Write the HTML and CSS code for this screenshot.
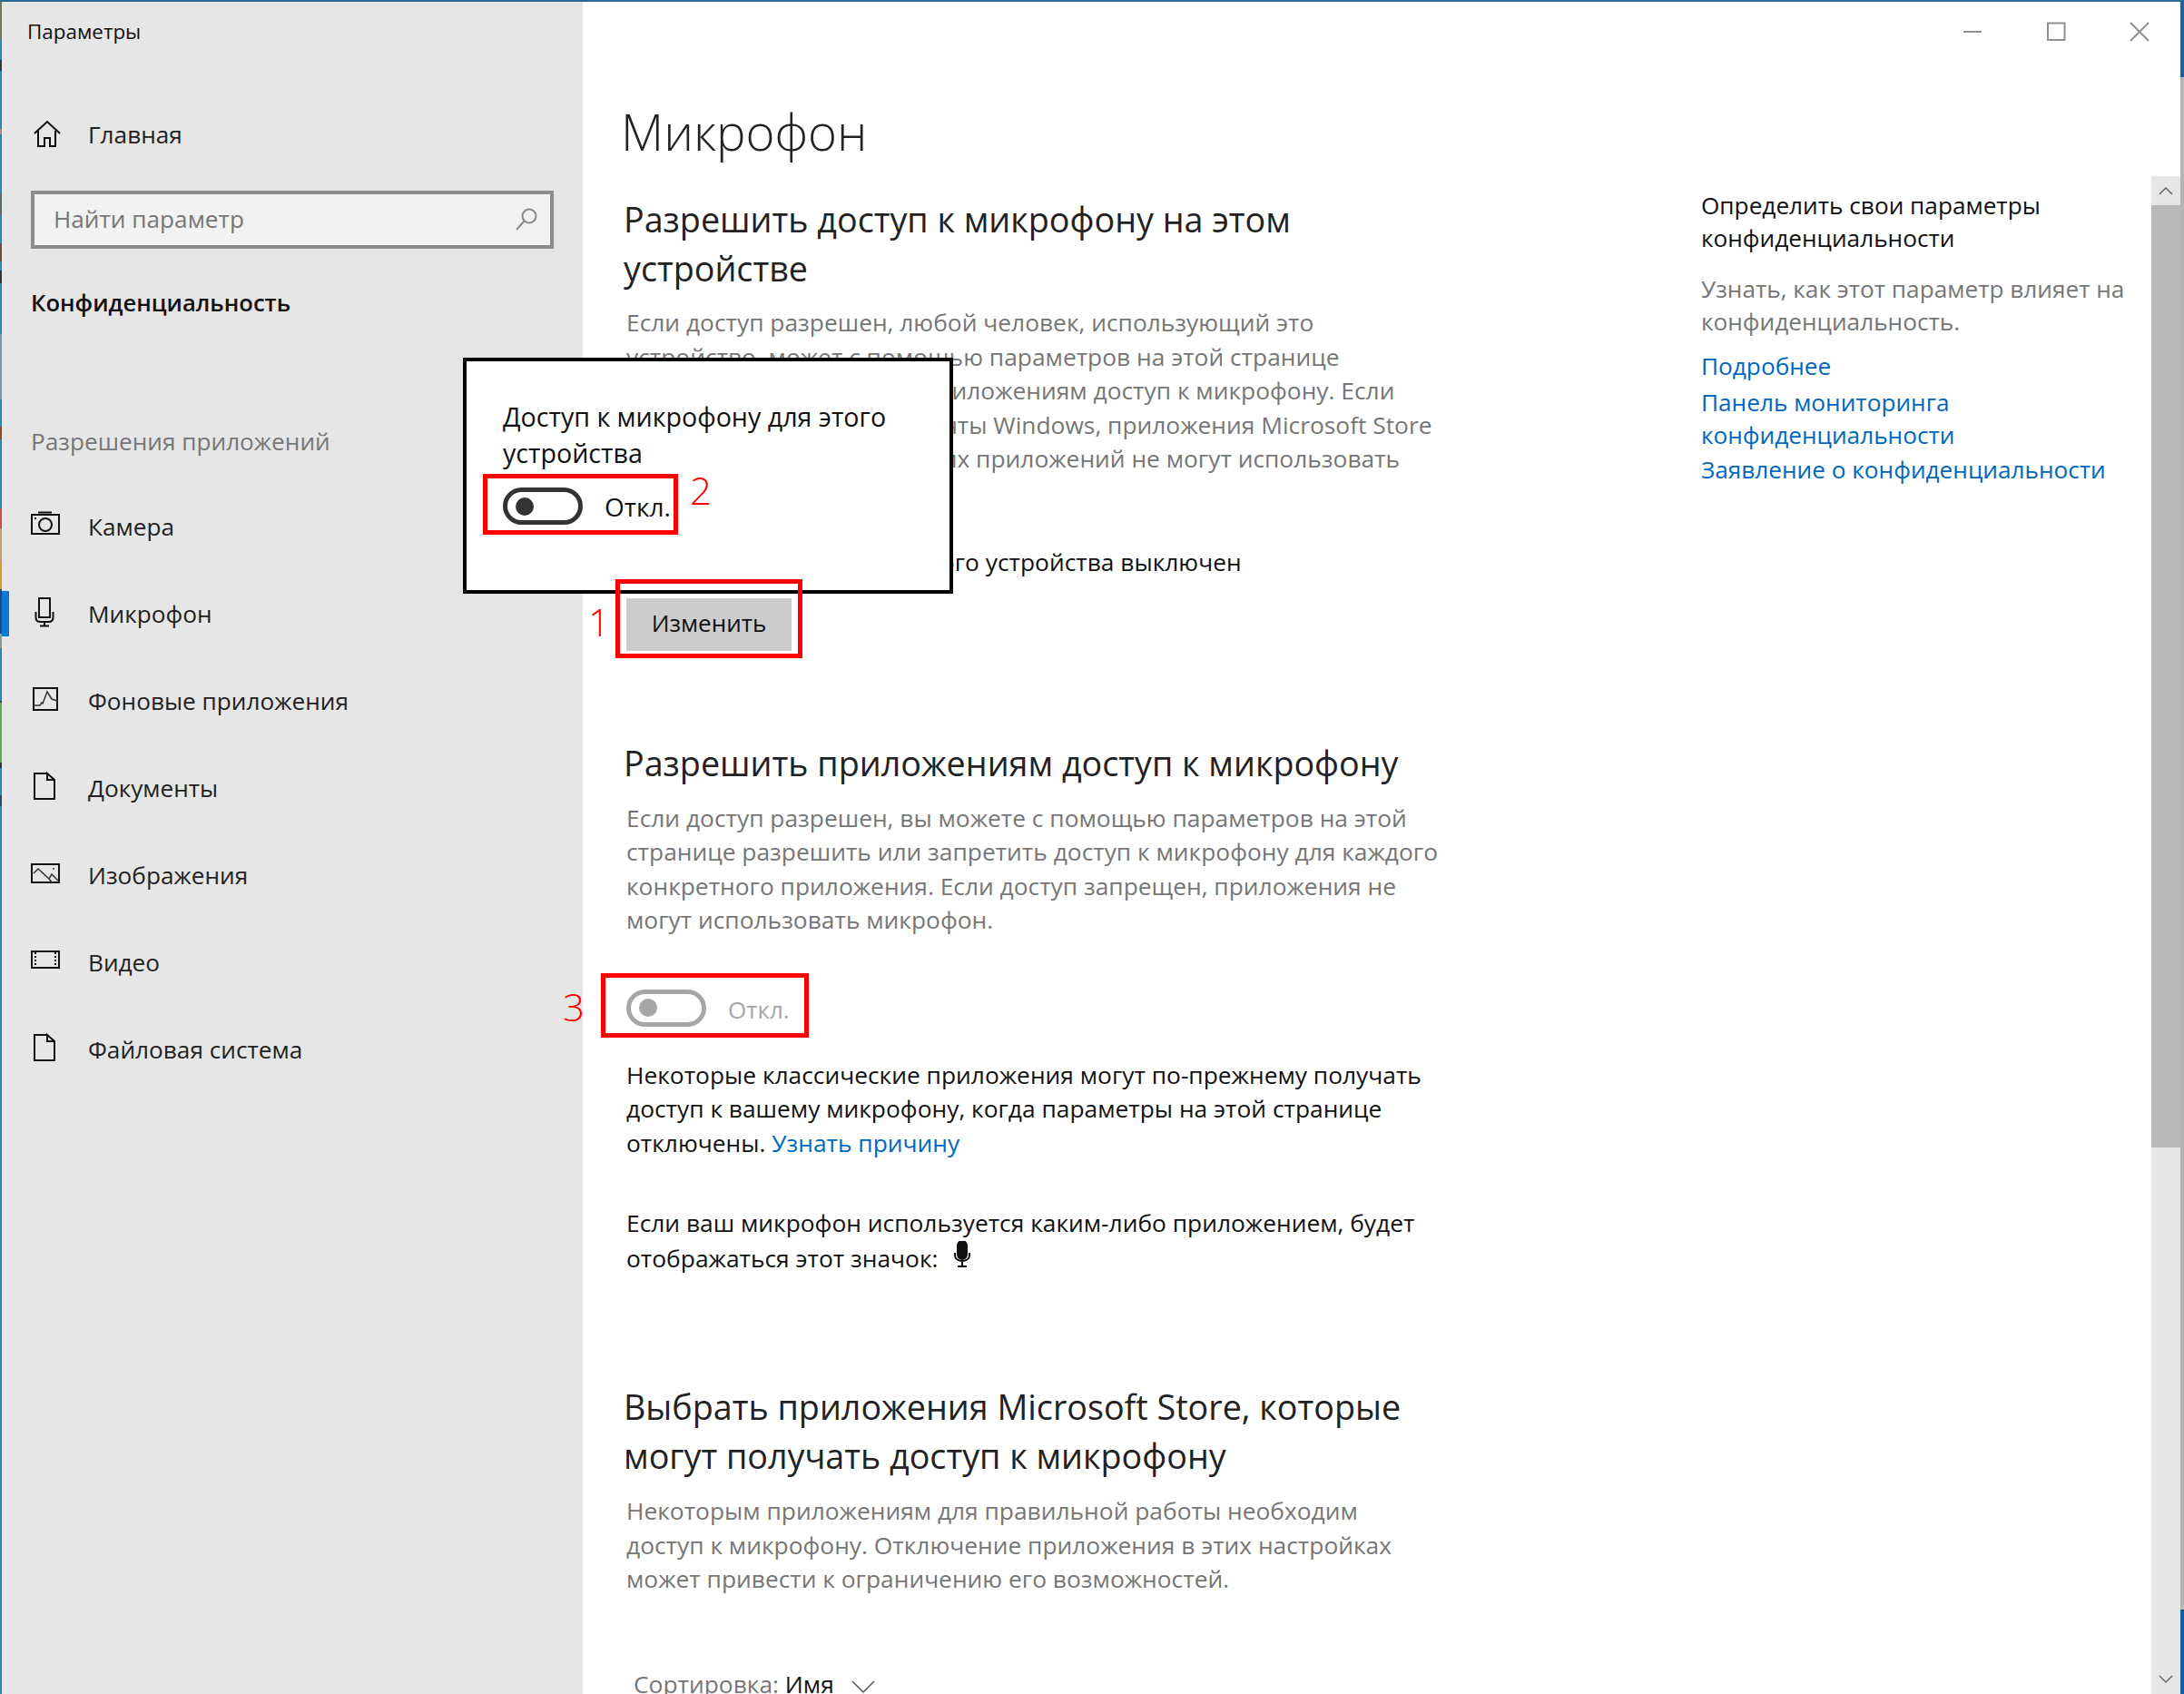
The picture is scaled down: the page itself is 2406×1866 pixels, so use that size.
FILE: index.html
```html
<!DOCTYPE html>
<html lang="ru">
<head>
<meta charset="utf-8">
<title>Параметры</title>
<link rel="stylesheet" href="styles.css">
</head>
<body>
<div class="window">
  <div class="rail"></div>
  <aside class="sidebar">
    <div class="app-title">Параметры</div>
    <a class="home">
      <span class="slot"><svg class="ico" width="34" height="34" viewBox="0 0 34 34"><path d="M4 16 18 3l14 13M8 13v17h7v-9h6v9h6V13"/></svg></span>Главная
    </a>
    <div class="search"><span class="search-text">Найти параметр</span>
      <svg class="search-ico" width="26" height="28" viewBox="0 0 26 28"><circle cx="16" cy="10" r="7.500"/><path d="M10.500 15.500 2 25"/></svg>
    </div>
    <div class="group">Конфиденциальность</div>
    <div class="caption-label">Разрешения приложений</div>
    <nav class="nav">
      <a class="item"><span class="slot"><svg class="ico" width="34" height="40" viewBox="0 0 34 40"><path d="M1 7h30v21H1z"/><circle cx="16" cy="18" r="7"/><path d="M8 4.500h15M4 11h2"/></svg></span>Камера</a>
      <a class="item active"><span class="slot"><svg class="ico" width="34" height="40" viewBox="0 0 34 40"><path d="M9 3h12v21H9z"/><path d="M5.500 18v6c0 3 2 5 5 5h9c3 0 5-2 5-5v-6M15 29v4M10 33.500h10"/></svg></span>Микрофон</a>
      <a class="item"><span class="slot"><svg class="ico" width="34" height="40" viewBox="0 0 34 40"><path d="M3 6h26v24H3z"/><path class="thin" d="M3 25h7l2-3 1 1 5-13 5 8 6 2"/></svg></span>Фоновые приложения</a>
      <a class="item"><span class="slot"><svg class="ico" width="34" height="40" viewBox="0 0 34 40"><path d="M18 4H4v28h22V11l-8-7v7h8"/></svg></span>Документы</a>
      <a class="item"><span class="slot"><svg class="ico" width="34" height="40" viewBox="0 0 34 40"><path d="M1 8h30v20H1z"/><path class="thin" d="M3 18l5-5 12 11 3-5 7 7M20 24l3 4M25 12v2"/></svg></span>Изображения</a>
      <a class="item"><span class="slot"><svg class="ico" width="34" height="40" viewBox="0 0 34 40"><path d="M1 8h30v18H1z"/><path class="dots" d="M5 9v16M27 9v16"/></svg></span>Видео</a>
      <a class="item"><span class="slot"><svg class="ico" width="34" height="40" viewBox="0 0 34 40"><path d="M18 4H4v28h22V11l-8-7v7h8"/></svg></span>Файловая система</a>
    </nav>
  </aside>
  <main class="main">
    <div class="caption">
      <svg class="cap-ico" width="22" height="22" viewBox="0 0 22 22"><path d="M1 11h20"/></svg>
      <svg class="cap-ico" width="22" height="22" viewBox="0 0 22 22"><path d="M2 1.500h18.500V20H2z"/></svg>
      <svg class="cap-ico" width="22" height="22" viewBox="0 0 22 22"><path d="M1 1l20 20M21 1 1 21"/></svg>
    </div>
    <div class="pane">
      <section class="content">
        <h1 class="title">Микрофон</h1>
        <h2 class="heading first">Разрешить доступ к микрофону на этом<br>устройстве</h2>
        <p class="text muted p1">Если доступ разрешен, любой человек, использующий это<br>устройство, может с помощью параметров на этой странице<br>выбирать, разрешать ли приложениям доступ к микрофону. Если<br>доступ запрещен, компоненты Windows, приложения Microsoft Store<br>и большинство классических приложений не могут использовать<br>микрофон.</p>
        <p class="text status">Доступ к микрофону для этого устройства выключен</p>
        <button class="change">Изменить</button>
        <h2 class="heading second">Разрешить приложениям доступ к микрофону</h2>
        <p class="text muted p2">Если доступ разрешен, вы можете с помощью параметров на этой<br>странице разрешить или запретить доступ к микрофону для каждого<br>конкретного приложения. Если доступ запрещен, приложения не<br>могут использовать микрофон.</p>
        <div class="toggle-row disabled"><span class="toggle"><i class="knob"></i></span><span class="toggle-label">Откл.</span></div>
        <p class="text p3">Некоторые классические приложения могут по-прежнему получать<br>доступ к вашему микрофону, когда параметры на этой странице<br>отключены. <a class="link">Узнать причину</a></p>
        <p class="text p4">Если ваш микрофон используется каким-либо приложением, будет<br>отображаться этот значок: <svg class="mic-fill" width="20" height="30" viewBox="0 0 20 30"><rect x="5" y="0" width="10" height="20" rx="5"/><path d="M2 13v3c0 8 16 8 16 0v-3M10 23v4M5 28h10"/></svg></p>
        <h2 class="heading third">Выбрать приложения Microsoft Store, которые<br>могут получать доступ к микрофону</h2>
        <p class="text muted p2">Некоторым приложениям для правильной работы необходим<br>доступ к микрофону. Отключение приложения в этих настройках<br>может привести к ограничению его возможностей.</p>
        <div class="sort text"><span class="sort-label">Сортировка:</span> Имя <svg class="sort-ico" width="26" height="14" viewBox="0 0 26 14"><path d="M1 1l12 12L25 1"/></svg></div>
      </section>
      <section class="related">
        <p class="rtext">Определить свои параметры<br>конфиденциальности</p>
        <p class="rtext muted r2">Узнать, как этот параметр влияет на<br>конфиденциальность.</p>
        <a class="link rtext r3">Подробнее</a>
        <a class="link rtext r4">Панель мониторинга<br>конфиденциальности</a>
        <a class="link rtext r5">Заявление о конфиденциальности</a>
      </section>
      <div class="scrollbar">
        <div class="sb-btn"><svg class="sb-ico" width="16" height="10" viewBox="0 0 16 10"><path d="M1 9l7-7 7 7"/></svg></div>
        <div class="sb-thumb"></div>
        <div class="sb-track"></div>
        <div class="sb-btn"><svg class="sb-ico" width="16" height="10" viewBox="0 0 16 10"><path d="M1 1l7 7 7-7"/></svg></div>
      </div>
    </div>
  </main>
  <div class="edge"></div>

  <div class="popup">
    <p class="popup-text">Доступ к микрофону для этого<br>устройства</p>
    <div class="toggle-row"><span class="toggle"><i class="knob"></i></span><span class="toggle-label">Откл.</span></div>
  </div>
  <div class="mark mark-1"></div>
  <div class="mark mark-2"></div>
  <div class="mark mark-3"></div>
  <span class="digit digit-1">1</span>
  <span class="digit digit-2">2</span>
  <span class="digit digit-3">3</span>
</div>
</body>
</html>
```

FILE: styles.css
```css
* { box-sizing: border-box; }
html, body { margin: 0; padding: 0; background: #fff; }
body { font-family: "Open Sans", "Noto Sans", sans-serif; color: #111; }
.window {
  position: relative;
  display: flex;
  width: 2406px;
  height: 1866px;
  overflow: hidden;
  border-top: 2px solid #2a6a90;
  white-space: nowrap;
}
.rail {
  flex: 0 0 2px;
  background: linear-gradient(
    #6a7a60 0 42px, #2a85b5 42px 64px, #2c3c4a 64px 76px, #2a85b5 76px 140px, #a88a8a 140px 146px,
    #2a85b5 146px 212px, #5a6a70 212px 236px, #2a85b5 236px 266px, #6a4a3a 266px 286px, #2a85b5 286px 296px,
    #333 296px 310px, #2a85b5 310px 366px, #7a9aa8 366px 438px, #2a85b5 438px 468px, #8a4a2a 468px 482px,
    #2a85b5 482px 558px, #c0504a 558px 580px, #c0a070 580px 616px, #c8a030 616px 647px, #1a4a8a 647px 696px,
    #8a9a8a 696px 712px, #2a85b5 712px 770px, #3a4a4a 770px 772px, #5aaa55 772px 838px, #333 838px 844px,
    #2a85b5 844px 874px, #2a4a6a 874px 886px, #2a85b5 886px
  );
}
.sidebar {
  flex: 0 0 640px;
  background: #e6e6e6;
  display: flex;
  flex-direction: column;
  font-size: 26.200px;
}
.app-title { font-size: 22.400px; line-height: 28px; margin: 19px 0 0 28px; color: #111; }
.home { display: flex; align-items: center; height: 40px; margin: 79px 0 0 32px; color: #222; }
.slot { display: flex; align-items: center; flex: 0 0 63px; }
.ico { fill: none; stroke: #111; stroke-width: 2; }
.ico .thin { stroke-width: 1.500; stroke: #333; }
.ico .dots { stroke-dasharray: 2 2; stroke-width: 2; }
.search {
  display: flex;
  align-items: center;
  justify-content: space-between;
  width: 576px;
  height: 64px;
  margin: 42px 0 0 32px;
  padding: 0 13px 0 21px;
  border: 4px solid #8c8c8c;
  background: #f2f2f2;
  color: #777;
}
.search-text { margin-top: -3px; }
.search-ico { fill: none; stroke: #888; stroke-width: 2; }
.group { margin: 40px 0 0 32px; font-size: 25.600px; font-weight: 600; line-height: 40px; color: #111; }
.caption-label { margin: 112px 0 0 32px; line-height: 40px; color: #777; }
.nav { display: flex; flex-direction: column; margin-top: 26px; }
.item { position: relative; display: flex; align-items: center; height: 96px; padding-left: 32px; color: #222; }
.item.active::before {
  content: "";
  position: absolute;
  left: 0;
  top: 23px;
  width: 8px;
  height: 50px;
  background: #0a78d7;
}
.main { flex: 1; display: flex; flex-direction: column; min-width: 0; }
.caption { display: flex; justify-content: flex-end; gap: 70px; height: 66px; padding: 22px 34px 0 0; }
.cap-ico { fill: none; stroke: #8f8f8f; stroke-width: 2; }
.pane { flex: 1; display: flex; min-height: 0; }
.content { flex: 0 0 1231px; padding-left: 48px; }
.title { margin: 47px 0 0 -6px; font-size: 54.600px; line-height: 60px; font-weight: 300; color: #222; }
.heading { margin: 0 0 0 -3px; font-size: 37.700px; line-height: 54px; font-weight: 400; color: #222; }
.heading.first { margin-top: 40px; }
.heading.second { margin-top: 97px; }
.heading.third { margin-top: 118px; }
.text { margin: 0; font-size: 26.350px; line-height: 37.500px; color: #111; }
.rtext { margin: 0; font-size: 26.200px; line-height: 36px; color: #111; }
.muted { color: #767676; }
.p1 { margin-top: 14px; }
.status { margin-top: 39px; }
.change {
  display: block;
  width: 182px;
  height: 58px;
  margin-top: 20px;
  padding-bottom: 5px;
  border: 0;
  background: #ccc;
  font: inherit;
  font-size: 26px;
  color: #111;
}
.p2 { margin-top: 15px; }
.toggle-row { display: flex; align-items: center; height: 41px; gap: 24px; margin-top: 57px; }
.toggle {
  display: flex;
  align-items: center;
  width: 88px;
  height: 41px;
  padding-left: 9px;
  border: 5px solid #333;
  border-radius: 21px;
}
.knob { width: 20px; height: 20px; border-radius: 50%; background: #333; }
.toggle-label { font-size: 28px; color: #111; }
.disabled .toggle { border-color: #a6a6a6; }
.disabled .knob { background: #a6a6a6; }
.disabled .toggle-label { margin-top: 3px; font-size: 26px; color: #a6a6a6; }
.p3 { margin-top: 35px; }
.p4 { margin-top: 51px; }
.link { color: #0067c0; }
.mic-fill { vertical-align: -1px; margin-left: 10px; fill: #111; stroke: #111; stroke-width: 2; }
.mic-fill path { fill: none; }
.sort { margin: 78px 0 0 8px; }
.sort-label { color: #767676; }
.sort-ico { margin-left: 12px; fill: none; stroke: #555; stroke-width: 1.500; }
.related { flex: 1; padding-top: 140px; padding-left: 1px; }
.r2 { margin-top: 20px; }
.related .link { display: block; }
.r3 { margin-top: 13px; }
.r4 { margin-top: 4px; }
.r5 { margin-top: 2px; }
.scrollbar { flex: 0 0 32px; display: flex; flex-direction: column; margin-top: 126px; background: #e6e6e6; }
.sb-btn { display: flex; align-items: center; justify-content: center; height: 32px; }
.sb-ico { fill: none; stroke: #666; stroke-width: 1.500; }
.sb-thumb { height: 1038px; background: #b9b9b9; }
.sb-track { flex: 1; }
.edge { flex: 0 0 4px; background: linear-gradient(#1d5f9f 0 83px, #b4b4b4 83px 1771px, #0f5ea8 1771px); }
.popup {
  position: absolute;
  left: 510px;
  top: 392px;
  width: 540px;
  height: 260px;
  padding: 41px 0 0 40px;
  border: 4px solid #000;
  background: #fff;
}
.popup-text { margin: 0; font-size: 28.600px; line-height: 40px; color: #111; }
.popup .toggle-row { margin-top: 18px; }
.mark { position: absolute; border: 5px solid #f00; }
.mark-1 { left: 678px; top: 636px; width: 206px; height: 87px; }
.mark-2 { left: 532px; top: 520px; width: 215px; height: 67px; }
.mark-3 { left: 662px; top: 1070px; width: 229px; height: 71px; }
.digit { position: absolute; font-size: 42px; line-height: 50px; color: #f00; font-weight: 300; }
.digit-1 { left: 648px; top: 658px; }
.digit-2 { left: 760px; top: 513px; }
.digit-3 { left: 620px; top: 1082px; }
```
